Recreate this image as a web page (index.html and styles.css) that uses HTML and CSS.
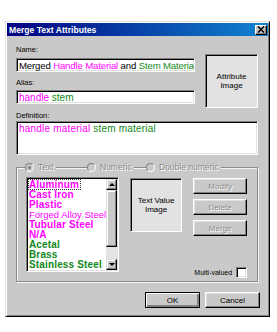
FILE: index.html
```html
<!DOCTYPE html>
<html lang="en">
<head>
    <meta charset="UTF-8">
    <title>Merge Text Attributes</title>
    <link rel="stylesheet" href="styles.css">
</head>
<body>
    <div class="window">
        <div class="titlebar">
            <span class="title">Merge Text Attributes</span>
            <span class="close">
                <svg width="8" height="7" viewBox="0 0 8 7"><path d="M1 0.5L7 6.5M7 0.5L1 6.5" stroke="#000" stroke-width="1.6"/></svg>
            </span>
        </div>
        <div class="client">
            <div class="top-row">
                <div class="fields">
                    <div class="lbl">Name:</div>
                    <div class="edit name">Merged&nbsp;<span class="pink">Handle Material</span>&nbsp;and&nbsp;<span class="green">Stem Material</span></div>
                    <div class="lbl alias-lbl">Alias:</div>
                    <div class="edit alias"><span class="pink">handle</span>&nbsp;<span class="green">stem</span></div>
                </div>
                <div class="image-box attr-image">Attribute<br>Image</div>
            </div>

            <div class="lbl def-lbl">Definition:</div>
            <div class="edit memo"><span class="pink">handle material</span>&nbsp;<span class="green">stem material</span></div>

            <div class="group">
                <div class="radios">
                    <div class="opt opt-text"><span class="opt-inner"><span class="radio checked"></span><span class="dis">Text</span></span></div>
                    <div class="opt opt-num"><span class="opt-inner"><span class="radio"></span><span class="dis">Numeric</span></span></div>
                    <div class="opt"><span class="opt-inner"><span class="radio"></span><span class="dis">Double numeric</span></span></div>
                </div>
                <div class="group-body">
                    <div class="listbox">
                        <ul class="items">
                            <li class="pink"><span class="focus">Aluminum</span></li>
                            <li class="pink">Cast Iron</li>
                            <li class="pink">Plastic</li>
                            <li class="pink plain">Forged Alloy Steel</li>
                            <li class="pink">Tubular Steel</li>
                            <li class="pink">N/A</li>
                            <li class="green">Acetal</li>
                            <li class="green">Brass</li>
                            <li class="green">Stainless Steel</li>
                        </ul>
                        <div class="vscroll">
                            <div class="sbtn"><span class="arrow up"></span></div>
                            <div class="thumb"></div>
                            <div class="track"></div>
                            <div class="sbtn"><span class="arrow down"></span></div>
                        </div>
                    </div>
                    <div class="side">
                        <div class="side-top">
                            <div class="image-box tv-image">Text Value<br>Image</div>
                            <div class="btn-col">
                                <div class="btn disabled"><span class="dis">Modify</span></div>
                                <div class="btn disabled"><span class="dis">Delete</span></div>
                                <div class="btn disabled"><span class="dis">Merge</span></div>
                            </div>
                        </div>
                        <div class="multi">
                            <span>Multi-valued</span>
                            <span class="check"></span>
                        </div>
                    </div>
                </div>
            </div>

            <div class="actions">
                <div class="btn default">OK</div>
                <div class="btn">Cancel</div>
            </div>
        </div>
    </div>
</body>
</html>
```

FILE: styles.css
```css
body {
    margin: 0;
    background-color: #fff;
    font-family: "Liberation Sans", Arial, sans-serif;
    color: #000;
}

.window {
    box-sizing: border-box;
    width: 265px;
    height: 296px;
    margin: 21px 0 0 5px;
    padding: 1px;
    background-color: #c9c9c9;
    border: 1px solid;
    border-color: #dfdfdf #000 #000 #dfdfdf;
    box-shadow: inset 1px 1px #fff, inset -1px -1px #808080;
}

.titlebar {
    height: 13px;
    display: flex;
    align-items: center;
    justify-content: space-between;
    padding: 0 1px 0 2px;
    background: linear-gradient(90deg, #000080, #1084d0);
}

.title {
    color: #fff;
    font-weight: bold;
    font-size: 8.6px;
}

.close {
    box-sizing: border-box;
    width: 12px;
    height: 10px;
    display: flex;
    align-items: center;
    justify-content: center;
    background-color: #c9c9c9;
    border: 1px solid;
    border-color: #fff #000 #000 #fff;
    box-shadow: inset -1px -1px #808080;
}

.client {
    padding: 8px 10px 0 9px;
}

.top-row {
    display: flex;
}

.fields {
    width: 179px;
    margin-right: 10px;
}

.lbl {
    height: 11px;
    line-height: 11px;
    font-size: 7.5px;
}

.alias-lbl {
    margin-top: 5px;
}

.def-lbl {
    margin-top: 2px;
}

.edit {
    box-sizing: border-box;
    height: 14px;
    margin-top: 3px;
    padding: 0 2px;
    display: flex;
    align-items: center;
    white-space: nowrap;
    overflow: hidden;
    font-size: 10px;
    background-color: #fff;
    border: 1px solid;
    border-color: #808080 #fff #fff #808080;
    box-shadow: inset 1px 1px #000, inset -1px -1px #dfdfdf;
}

.name {
    font-size: 9.6px;
    letter-spacing: -0.15px;
}

.alias {
    margin-top: 2px;
}

.memo {
    height: 34px;
    margin-top: 0;
    align-items: flex-start;
    padding-top: 2px;
    line-height: 10px;
    letter-spacing: 0.2px;
}

.pink {
    color: #ff00ff;
}

.green {
    color: #11881a;
}

.image-box {
    box-sizing: border-box;
    display: flex;
    align-items: center;
    justify-content: center;
    text-align: center;
    font-size: 8px;
    line-height: 9px;
    background-color: #e2e2e2;
    border: 1px solid;
    border-color: #808080 #fff #fff #808080;
    box-shadow: inset 1px 1px #000;
}

.attr-image {
    width: 53px;
    height: 54px;
    margin-top: 10px;
}

.group {
    box-sizing: border-box;
    width: 242px;
    height: 115px;
    margin-top: 12px;
    border: 1px solid #8a8a8a;
    box-shadow: inset 1px 1px #f4f4f4, 1px 1px #f4f4f4;
}

.radios {
    display: flex;
    height: 12px;
    margin-top: -7px;
    padding-left: 8px;
    font-size: 8.5px;
}

.opt {
    display: flex;
    align-items: center;
}

.opt-text {
    width: 62px;
}

.opt-num {
    width: 59px;
}

.opt-inner {
    display: flex;
    align-items: center;
    gap: 4px;
    padding-right: 2px;
    background-color: #c9c9c9;
}

.radio {
    box-sizing: border-box;
    width: 9px;
    height: 9px;
    border-radius: 50%;
    display: flex;
    align-items: center;
    justify-content: center;
    background-color: #c9c9c9;
    border: 1px solid;
    border-color: #808080 #fff #fff #808080;
}

.radio.checked::after {
    content: "";
    width: 3px;
    height: 3px;
    border-radius: 50%;
    background-color: #808080;
}

.dis {
    color: #8a8a8a;
    text-shadow: 1px 1px #fff;
}

.group-body {
    display: flex;
    height: 101px;
    margin-top: 4px;
    padding-left: 9px;
}

.listbox {
    box-sizing: border-box;
    width: 96px;
    height: 95px;
    display: flex;
    background-color: #fff;
    border: 1px solid;
    border-color: #808080 #fff #fff #808080;
    box-shadow: inset 1px 1px #000, inset -1px -1px #dfdfdf;
    padding: 1px;
}

.items {
    flex: 1;
    margin: 0;
    padding: 1px 0 0 1px;
    list-style: none;
    font-size: 10px;
    font-weight: bold;
    letter-spacing: 0.15px;
    line-height: 10px;
    white-space: nowrap;
    overflow: hidden;
}

.items .plain {
    font-weight: normal;
    font-size: 9.5px;
    letter-spacing: 0;
}

.focus {
    display: inline-block;
    height: 9px;
    line-height: 9px;
    outline: 1px dotted #333;
    padding-right: 1px;
}

.vscroll {
    width: 11px;
    display: flex;
    flex-direction: column;
}

.sbtn {
    box-sizing: border-box;
    height: 11px;
    display: flex;
    align-items: center;
    justify-content: center;
    background-color: #c9c9c9;
    border: 1px solid;
    border-color: #dfdfdf #000 #000 #dfdfdf;
    box-shadow: inset -1px -1px #808080, inset 1px 1px #fff;
}

.arrow {
    width: 0;
    height: 0;
    border-left: 3px solid transparent;
    border-right: 3px solid transparent;
}

.arrow.up {
    border-bottom: 3px solid #000;
}

.arrow.down {
    border-top: 3px solid #000;
}

.thumb {
    box-sizing: border-box;
    height: 57px;
    background-color: #c9c9c9;
    border: 1px solid;
    border-color: #dfdfdf #000 #000 #dfdfdf;
    box-shadow: inset -1px -1px #808080, inset 1px 1px #fff;
}

.track {
    flex: 1;
    background-color: #e4e4e4;
}

.side {
    flex: 1;
    margin-left: 11px;
    padding-right: 14px;
    display: flex;
    flex-direction: column;
    justify-content: space-between;
}

.side-top {
    display: flex;
    margin-top: 1px;
}

.tv-image {
    width: 52px;
    height: 54px;
}

.btn-col {
    margin-left: 11px;
    display: flex;
    flex-direction: column;
    gap: 5px;
}

.btn {
    box-sizing: border-box;
    width: 55px;
    height: 16px;
    display: flex;
    align-items: center;
    justify-content: center;
    font-size: 8px;
    background-color: #c9c9c9;
    border: 1px solid;
    border-color: #fff #000 #000 #fff;
    box-shadow: inset -1px -1px #808080, inset 1px 1px #dfdfdf;
}

.btn-col .btn {
    width: 54px;
}

.btn.default {
    border-color: #000;
    box-shadow: inset 1px 1px #fff, inset -2px -2px #808080;
}

.multi {
    height: 11px;
    display: flex;
    align-items: center;
    justify-content: flex-end;
    gap: 4px;
    font-size: 7px;
    white-space: nowrap;
}

.check {
    box-sizing: border-box;
    width: 11px;
    height: 11px;
    background-color: #fff;
    border: 1px solid;
    border-color: #808080 #fff #fff #808080;
    box-shadow: inset 1px 1px #000, inset -1px -1px #dfdfdf;
}

.actions {
    display: flex;
    justify-content: flex-end;
    gap: 5px;
    margin-top: 10px;
    margin-right: -2px;
}
```
